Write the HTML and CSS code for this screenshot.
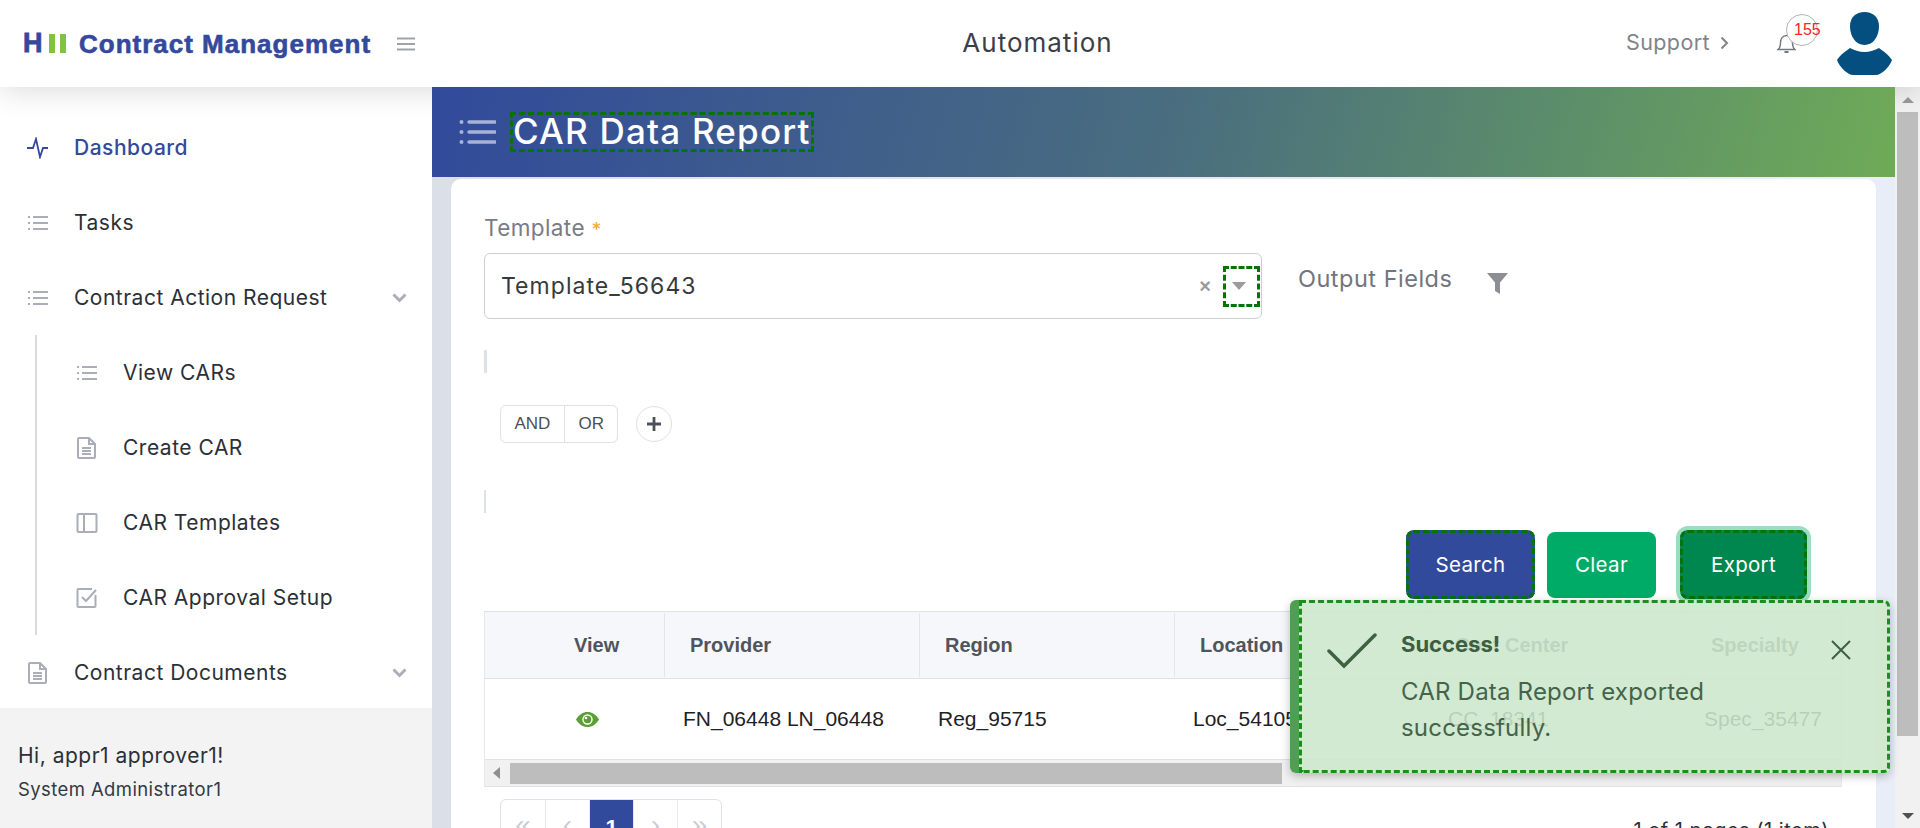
FILE: index.html
```html
<!DOCTYPE html>
<html lang="en">
<head>
<meta charset="utf-8">
<title>CAR Data Report</title>
<link rel="stylesheet" href="styles.css">
</head>
<body>
<div class="app">
  <header class="topbar">
    <div class="brand">
      <span class="logo-h">H</span><span class="logo-ii"><i></i><i></i></span>
      <span class="brand-name">Contract Management</span>
      <svg class="burger" width="18" height="14" viewBox="0 0 18 14"><path d="M0 1.500h18M0 7h18M0 12.500h18" stroke="#a0a3a8" stroke-width="2"/></svg>
    </div>
    <div class="top-title">Automation</div>
    <div class="top-right">
      <span class="support">Support</span>
      <svg class="support-arrow" width="9" height="14" viewBox="0 0 9 14"><path d="M1.500 1.500 7 7l-5.500 5.500" fill="none" stroke="#808488" stroke-width="2"/></svg>
      <div class="bell-wrap">
        <svg width="19" height="20" viewBox="0 0 19 20"><path d="M1 15.500h17c-2-1.500-2.500-3.500-2.500-6.500C15.500 5 13.500 1.500 9.500 1.500S3.500 5 3.500 9c0 3-.5 5-2.500 6.500Z" fill="none" stroke="#737780" stroke-width="1.400"/><path d="M7.500 18h4" stroke="#737780" stroke-width="2"/></svg>
        <span class="badge">155</span>
      </div>
      <svg class="avatar" width="55" height="64" viewBox="0 0 55 64"><path d="M27.500 0c8.500 0 14.500 5.500 14.500 14 0 10-5.500 19-14.500 19S13 24 13 14C13 5.500 19 0 27.500 0Z" fill="#044e80"/><path d="M0 48c3-5 9-9 13-12 4 2 9 4 14.500 4S38 38 42 36c4 3 10 7 13 12-3 8-11 15-16 15H16C11 63 3 56 0 48Z" fill="#044e80"/></svg>
    </div>
  </header>
  <div class="body-row">
    <aside class="sidebar">
      <nav class="nav">
        <a class="nav-item active"><svg class="ic" width="24" height="22" viewBox="0 0 24 22"><path d="M1 11h6l3-9 4 18 3-9h5" fill="none" stroke="#34499b" stroke-width="1.800"/></svg><span>Dashboard</span></a>
        <a class="nav-item"><svg class="ic" width="24" height="16" viewBox="0 0 20 16"><use href="#i-list"/></svg><span>Tasks</span></a>
        <a class="nav-item"><svg class="ic" width="24" height="16" viewBox="0 0 20 16"><use href="#i-list"/></svg><span>Contract Action Request</span><svg class="chev" width="15" height="10" viewBox="0 0 15 10"><path d="m1.500 1.500 6 6 6-6" fill="none" stroke="#a9aeb9" stroke-width="3"/></svg></a>
        <div class="subnav">
          <a class="nav-item"><svg class="ic" width="24" height="16" viewBox="0 0 20 16"><use href="#i-list"/></svg><span>View CARs</span></a>
          <a class="nav-item"><svg class="ic" width="24" height="22" viewBox="0 0 24 22"><use href="#i-doc"/></svg><span>Create CAR</span></a>
          <a class="nav-item"><svg class="ic" width="24" height="22" viewBox="0 0 24 22"><path d="M3.500 2h17a1 1 0 0 1 1 1v16a1 1 0 0 1-1 1h-17a1 1 0 0 1-1-1V3a1 1 0 0 1 1-1ZM9 2v18" fill="none" stroke="#a9aeb9" stroke-width="2"/></svg><span>CAR Templates</span></a>
          <a class="nav-item"><svg class="ic" width="24" height="22" viewBox="0 0 24 22"><path d="M20.500 8v11a1 1 0 0 1-1 1h-16a1 1 0 0 1-1-1V3a1 1 0 0 1 1-1H17M7 10l4 4 10-11" fill="none" stroke="#a9aeb9" stroke-width="2"/></svg><span>CAR Approval Setup</span></a>
        </div>
        <a class="nav-item"><svg class="ic" width="24" height="22" viewBox="0 0 24 22"><use href="#i-doc"/></svg><span>Contract Documents</span><svg class="chev" width="15" height="10" viewBox="0 0 15 10"><path d="m1.500 1.500 6 6 6-6" fill="none" stroke="#a9aeb9" stroke-width="3"/></svg></a>
      </nav>
      <div class="user">
        <div class="user-name">Hi, appr1 approver1!</div>
        <div class="user-role">System Administrator1</div>
      </div>
    </aside>
    <main class="main">
      <div class="banner">
        <svg width="37" height="26" viewBox="0 0 37 26"><path d="M10 3h26M10 13h26M10 23h26" stroke="#a6b2d8" stroke-width="3.500" stroke-linecap="round"/><circle cx="2.500" cy="3" r="2" fill="#a6b2d8"/><circle cx="2.500" cy="13" r="2" fill="#a6b2d8"/><circle cx="2.500" cy="23" r="2" fill="#a6b2d8"/></svg>
        <h1 class="banner-title">CAR Data Report</h1>
      </div>
      <section class="card">
        <div class="template-row">
          <div class="template-col">
            <label class="field-label">Template <b>*</b></label>
            <div class="select">
              <span class="select-value">Template_56643</span>
              <span class="select-x">×</span>
              <span class="select-arrow"><i></i></span>
            </div>
          </div>
          <div class="output">
            <span>Output Fields</span>
            <svg width="21" height="21" viewBox="0 0 21 21"><path d="M0 0h21l-8 9.500V21l-5-3V9.500Z" fill="#8b8e94"/></svg>
          </div>
        </div>
        <div class="qb-bar thick"></div>
        <div class="qb-row">
          <div class="qb-toggle"><span>AND</span><span>OR</span></div>
          <div class="qb-add"><svg width="16" height="16" viewBox="0 0 16 16"><path d="M8 1v14M1 8h14" stroke="#4a5059" stroke-width="2.800"/></svg></div>
        </div>
        <div class="qb-bar"></div>
        <div class="actions">
          <button class="btn btn-search">Search</button>
          <button class="btn btn-clear">Clear</button>
          <button class="btn btn-export">Export</button>
        </div>
        <div class="grid-box">
          <div class="grid-head">
            <div class="th th-view">View</div>
            <div class="th">Provider</div>
            <div class="th">Region</div>
            <div class="th">Location</div>
            <div class="th">Cost Center</div>
            <div class="th">Specialty</div>
          </div>
          <div class="grid-row">
            <div class="td td-view"><svg width="23" height="15" viewBox="0 0 23 15"><path d="M0 7.500C3 2.500 7 0 11.500 0S20 2.500 23 7.500C20 12.500 16 15 11.500 15S3 12.500 0 7.500Z" fill="#5a9e34"/><circle cx="11.500" cy="7.500" r="5.200" fill="#fff"/><circle cx="11.500" cy="7.500" r="3.800" fill="#5a9e34"/><circle cx="10" cy="6" r="1.300" fill="#fff"/></svg></div>
            <div class="td">FN_06448 LN_06448</div>
            <div class="td">Reg_95715</div>
            <div class="td">Loc_54105</div>
            <div class="td">CC_18341</div>
            <div class="td">Spec_35477</div>
          </div>
          <div class="hscroll">
            <span class="hs-left"></span>
            <span class="hs-thumb"></span>
            <span class="hs-right"></span>
          </div>
        </div>
        <div class="pager-row">
          <div class="pager">
            <span>«</span><span>‹</span><span class="on">1</span><span>›</span><span>»</span>
          </div>
          <div class="pager-info">1 of 1 pages (1 item)</div>
        </div>
      </section>
    </main>
    <div class="vscroll">
      <span class="vs-up"></span>
      <span class="vs-thumb"></span>
      <span class="vs-down"></span>
    </div>
  </div>
  <div class="toast">
    <div class="toast-inner">
      <svg class="toast-check" width="50" height="36" viewBox="0 0 50 36"><path d="M2 18l15 15L48 2" fill="none" stroke="#3f6140" stroke-width="3.500" stroke-linecap="round"/></svg>
      <div class="toast-text">
        <div class="toast-title">Success!</div>
        <div class="toast-msg">CAR Data Report exported successfully.</div>
      </div>
      <svg class="toast-close" width="20" height="20" viewBox="0 0 20 20"><path d="M1 1l18 18M19 1 1 19" stroke="#3f5f44" stroke-width="2"/></svg>
    </div>
  </div>
</div>
<svg class="defs" width="0" height="0">
  <defs>
    <g id="i-list" stroke="#a9aeb9" fill="none"><path d="M5 2h15M5 8h15M5 14h15" stroke-width="2"/><path d="M0 2h2M0 8h2M0 14h2" stroke-width="2"/></g>
    <g id="i-doc" fill="none" stroke="#a9aeb9" stroke-width="2"><path d="M4 1h10l6 6v13a1 1 0 0 1-1 1H4a1 1 0 0 1-1-1V2a1 1 0 0 1 1-1ZM14 1v6h6M7 11h9M7 14h9M7 17h9"/></g>
  </defs>
</svg>
</body>
</html>
```

FILE: styles.css
```css
* { box-sizing: border-box; }
html, body { margin: 0; height: 100%; overflow: hidden; }
body { font-family: Inter, "Noto Sans", sans-serif; color: #2b3038; background: #fff; }
.defs { display: block; height: 0; }
.app { position: relative; width: 1920px; height: 828px; display: flex; flex-direction: column; overflow: hidden; }

.topbar { height: 87px; flex: none; display: flex; align-items: center; background: #fff; box-shadow: 0 4px 30px rgba(0,0,0,.14); position: relative; z-index: 1; }
.brand { width: 432px; flex: none; display: flex; align-items: center; padding-left: 23px; }
.logo-h { font: 900 27px/1 "Liberation Sans", sans-serif; color: #34499b; width: 26px; -webkit-text-stroke: .8px #34499b; }
.logo-ii { display: flex; gap: 5px; width: 30px; }
.logo-ii i { width: 6px; height: 19px; background: #80c242; }
.brand-name { font: 700 26px/1 "Liberation Sans", sans-serif; color: #34499b; letter-spacing: 1px; -webkit-text-stroke: .6px #34499b; white-space: nowrap; }
.burger { margin-left: 26px; margin-right: -3px; }
.top-title { flex: 1; text-align: center; padding-left: 17px; font-size: 26px; color: #3c4046; letter-spacing: 1px; padding-bottom: 2px; }
.top-right { width: 294px; flex: none; display: flex; align-items: center; height: 100%; }
.support { font-size: 21.500px; color: #808488; letter-spacing: .4px; padding-bottom: 4px; }
.support-arrow { margin-left: 10px; margin-bottom: 2px; }
.bell-wrap { position: relative; margin-left: 48px; width: 60px; height: 20px; }
.badge { position: absolute; left: 9px; top: -20px; width: 32px; height: 32px; border-radius: 50%; border: 1px solid #b5b5b5; background: #fff; font: 16px/30px "Liberation Sans", sans-serif; color: #f8232b; padding-left: 7px; white-space: nowrap; }
.avatar { margin-top: 0; }

.body-row { flex: 1; min-height: 0; display: flex; }
.sidebar { width: 432px; flex: none; display: flex; flex-direction: column; background: #fff; }
.nav { flex: 1; min-height: 0; padding-top: 23px; }
.nav-item { height: 75px; display: flex; align-items: center; font-size: 21px; color: #2b3038; padding-left: 26px; padding-right: 25px; letter-spacing: .5px; }
.nav-item .ic { width: 24px; margin-right: 24px; flex: none; }
.nav-item span { flex: 1; }
.nav-item.active { color: #34499b; font-weight: 500; }
.chev { flex: none; }
.subnav { margin-left: 35px; border-left: 2px solid #d8dae0; height: 300px; }
.subnav .nav-item { padding-left: 38px; }
.user { height: 120px; flex: none; background: #f3f3f3; padding: 34px 18px 0; }
.user-name { font-size: 21px; line-height: 28px; color: #2b3038; letter-spacing: .5px; white-space: nowrap; }
.user-role { font-size: 18.500px; line-height: 26px; margin-top: 6px; color: #343a42; letter-spacing: .4px; white-space: nowrap; }

.main { width: 1463px; flex: none; min-width: 0; overflow: hidden; background: linear-gradient(90deg, #dbe0e8, #e9edf7); position: relative; z-index: 2; }
.banner { height: 90px; display: flex; align-items: center; padding-left: 27px; background: linear-gradient(105deg, #324a9b 0%, #4a6f7e 52%, #6eab57 100%); }
.banner-title { margin: 0 0 0 14px; font-size: 35px; line-height: 38px; font-weight: 500; color: #fff; letter-spacing: 1.2px; outline: 3px dashed #067306; outline-offset: -3px; padding: 0 3px 2px 3px; white-space: nowrap; }

.card { margin: 2px 19px 0; width: 1425px; background: #fff; border-radius: 10px 10px 0 0; padding: 33px 34px 0 33px; height: 700px; }
.template-row { display: flex; }
.template-col { width: 778px; }
.field-label { display: block; font-size: 22.500px; line-height: 32px; color: #777c85; letter-spacing: .4px; margin-bottom: 7px; }
.field-label b { color: #f5a623; font-weight: 400; font-size: 19px; }
.select { height: 66px; border: 1px solid #cfcfcf; border-radius: 6px; display: flex; align-items: center; padding: 0 1px 0 16px; }
.select-value { flex: 1; font-size: 23px; color: #363a40; letter-spacing: 1.050px; }
.select-x { font: 700 20px/1 "Liberation Sans", sans-serif; color: #9b9b9b; margin-right: 12px; }
.select-arrow { width: 37px; height: 41px; outline: 3px dashed #067306; outline-offset: -3px; display: flex; align-items: center; justify-content: center; padding-right: 6px; }
.select-arrow i { width: 0; height: 0; border: 7px solid transparent; border-top: 8px solid #9b9b9b; border-bottom: 0; }
.output { display: flex; align-items: flex-start; margin-left: 36px; padding-top: 52px; font-size: 23.500px; line-height: 30px; color: #71757e; letter-spacing: .5px; }
.output svg { margin-left: 35px; margin-top: 9px; }

.qb-bar { width: 2px; height: 23px; background: #dde1e8; margin-top: 31px; }
.qb-bar.thick { width: 3px; }
.qb-row { display: flex; align-items: center; gap: 18px; margin-top: 32px; margin-left: 16px; }
.qb-toggle { display: flex; height: 38px; border: 1px solid #dfe1e6; border-radius: 6px; font: 17px/36px "Liberation Sans", sans-serif; color: #4a5059; }
.qb-toggle span { padding: 0 13.500px; }
.qb-toggle span + span { border-left: 1px solid #dfe1e6; }
.qb-add { width: 36px; height: 36px; border: 1px solid #dfe1e6; border-radius: 50%; display: flex; align-items: center; justify-content: center; }
.qb-row + .qb-bar { margin-top: 47px; }

.actions { display: flex; justify-content: flex-end; align-items: center; margin-top: 17px; margin-right: 35px; }
.btn { height: 69px; border: 0; border-radius: 8px; color: #fff; font-family: inherit; font-size: 20.500px; padding: 0; letter-spacing: .3px; }
.btn-search { width: 129px; background: #324a9c; outline: 3px dashed #067306; outline-offset: -3px; }
.btn-clear { width: 109px; height: 66px; margin-left: 12px; background: #00ab68; }
.btn-export { width: 127px; margin-left: 24px; background: #00874f; outline: 3px dashed #067306; outline-offset: -3px; box-shadow: 0 0 0 4px #9cdcc0; }

.grid-box { margin-top: 12px; width: 1358px; border-top: 1px solid #dfe1e6; border-left: 1px solid #e6e8ec; border-right: 1px solid #e6e8ec; border-bottom: 1px solid #dfe1e6; }
.grid-head, .grid-row { display: grid; grid-template-columns: 179px 255px 255px 255px 256px 156px; }
.grid-head { height: 67px; background: #f6f7fa; border-bottom: 1px solid #dfe1e6; padding: 1px 0; }
.th { font: 700 20px/64px "Liberation Sans", sans-serif; color: #4f555e; padding-left: 25px; border-left: 1px solid #e3e5ea; white-space: nowrap; }
.th-view { border-left: 0; padding-left: 89px; }
.grid-row { height: 81px; border-bottom: 1px solid #dfe1e6; }
.td { font: 21px/80px "Liberation Sans", sans-serif; color: #1e2126; padding-left: 19px; white-space: nowrap; overflow: visible; }
.td-view { padding-left: 91px; display: flex; align-items: center; }
.hscroll { height: 26px; display: flex; align-items: center; background: #f1f1f1; }
.hs-left { width: 25px; flex: none; display: flex; position: relative; height: 100%; }
.hs-left::before { content: ""; margin: 7px 0 0 8px; width: 0; height: 0; border: 6px solid transparent; border-right: 7px solid #8f8f8f; border-left: 0; }
.hs-thumb { width: 772px; height: 21px; background: #bdbdbd; }
.hs-right { flex: 1; }

.pager-row { display: flex; justify-content: space-between; align-items: flex-start; padding: 12px 13px 0 16px; width: 1358px; }
.pager { display: flex; height: 60px; border: 1px solid #dfe1e6; border-radius: 6px; overflow: hidden; }
.pager span { width: 44px; text-align: center; font: 28px/50px "Liberation Sans", sans-serif; color: #c8cbd0; border-left: 1px solid #e8e9ed; }
.pager span:first-child { border-left: 0; }
.pager .on { background: #324a9c; color: #fff; font: 700 22px/56px "Liberation Sans", sans-serif; }
.pager-info { font-size: 20px; line-height: 28px; color: #2b3038; padding-top: 17px; letter-spacing: .5px; white-space: nowrap; }

.vscroll { width: 25px; flex: none; display: flex; flex-direction: column; align-items: center; background: #f1f1f1; }
.vs-up { height: 25px; flex: none; display: flex; align-items: center; }
.vs-up::before { content: ""; border: 6px solid transparent; border-bottom: 6px solid #9a9a9a; border-top: 0; width: 0; height: 0; }
.vs-thumb { width: 21px; height: 624px; background: #bdbdbd; flex: none; }
.vs-down { flex: 1; display: flex; align-items: flex-end; padding-bottom: 9px; }
.vs-down::before { content: ""; border: 6px solid transparent; border-top: 6px solid #505050; border-bottom: 0; width: 0; height: 0; }

.toast { position: absolute; left: 1290px; top: 600px; width: 600px; height: 173px; z-index: 5; border-left: 9px solid #4f9f53; border-radius: 6px; box-shadow: 0 3px 10px rgba(0,0,0,.25); background: rgba(205,231,204,.88); }
.toast-inner { height: 100%; border: 3px dashed #1a8f1a; border-radius: 0 6px 6px 0; display: flex; align-items: flex-start; padding: 30px 0 0 25px; }
.toast-check { flex: none; }
.toast-text { width: 370px; margin-left: 24px; color: #44644a; }
.toast-title { font-size: 22px; line-height: 26px; font-weight: 700; color: #3d5f3f; margin-top: -2px; }
.toast-msg { font-size: 24px; line-height: 36px; margin-top: 17px; letter-spacing: .2px; }
.toast-close { flex: none; margin-left: 60px; margin-top: 7px; }
```
